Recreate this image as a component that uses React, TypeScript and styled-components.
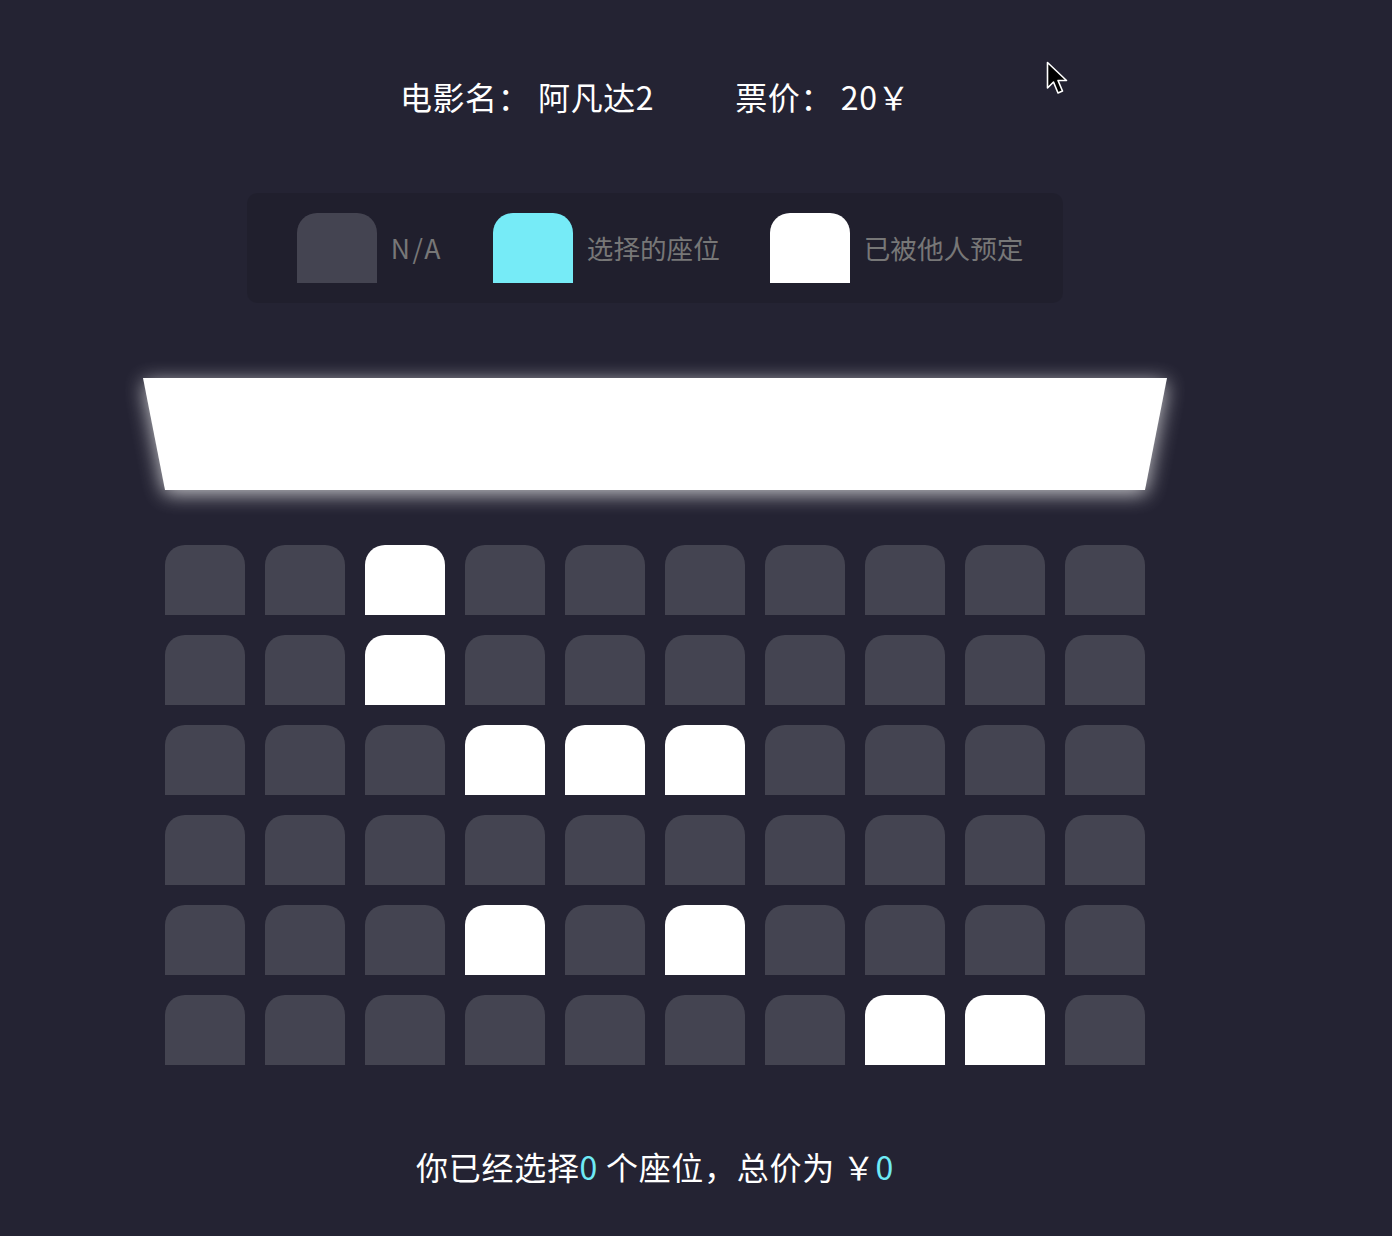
import styled, { createGlobalStyle } from 'styled-components';

const GlobalStyle = createGlobalStyle`
  body {
    margin: 0;
    background: #242333;
    font-family: "Noto Sans CJK SC", "Noto Sans", sans-serif;
    color: #fff;
  }
`;

type SeatState = 'na' | 'selected' | 'occupied';

const occupied: Record<number, number[]> = {
  0: [2],
  1: [2],
  2: [3, 4, 5],
  3: [],
  4: [3, 5],
  5: [7, 8],
};

const Page = styled.div`
  position: relative;
  width: 1310px;
  min-height: 1236px;
  display: flex;
  flex-direction: column;
  align-items: center;
`;

const Header = styled.div`
  margin-top: 72px;
  display: flex;
  gap: 81px;
  font-size: 32px;
  line-height: 48px;
  letter-spacing: 0.6px;
`;

const Legend = styled.ul`
  margin: 73px 0 0;
  padding: 20px 40px 20px 50px;
  list-style: none;
  display: flex;
  gap: 50px;
  background: rgba(0, 0, 0, 0.1);
  border-radius: 10px;
`;

const LegendItem = styled.li`
  display: flex;
  align-items: center;
  gap: 14px;
  color: #777;
  font-size: 26.6px;
  line-height: 1;
`;

const Label = styled.span<{ $wide?: boolean }>`
  letter-spacing: ${(p) => (p.$wide ? '2.5px' : '0')};
`;

const Seat = styled.div<{ $state: SeatState }>`
  width: 80px;
  height: 70px;
  border-top-left-radius: 20px;
  border-top-right-radius: 20px;
  background: ${(p) =>
    p.$state === 'occupied' ? '#fff' : p.$state === 'selected' ? '#76ebf7' : '#444451'};
`;

const ScreenGlow = styled.div`
  margin-top: 75px;
  filter: drop-shadow(0 4px 10px rgba(255, 255, 255, 0.75));
`;

const Screen = styled.div`
  width: 1024px;
  height: 112px;
  background: #fff;
  clip-path: polygon(0 0, 100% 0, calc(100% - 22px) 100%, 22px 100%);
`;

const SeatGrid = styled.div`
  margin-top: 55px;
  display: grid;
  grid-template-columns: repeat(10, 80px);
  grid-auto-rows: 70px;
  gap: 20px;
`;

const Footer = styled.p`
  margin: 77px 0 0;
  font-size: 32px;
  line-height: 48px;
  letter-spacing: 0.7px;
`;

const Count = styled.span`
  color: #6feaf6;
`;

const Cursor = styled.svg`
  position: absolute;
  left: 1046px;
  top: 61px;
`;

export default function App() {
  return (
    <>
      <GlobalStyle />
      <Page>
        <Header>
          <span>电影名： 阿凡达2</span>
          <span>票价： 20￥</span>
        </Header>
        <Legend>
          <LegendItem>
            <Seat $state="na" />
            <Label $wide>N/A</Label>
          </LegendItem>
          <LegendItem>
            <Seat $state="selected" />
            <Label>选择的座位</Label>
          </LegendItem>
          <LegendItem>
            <Seat $state="occupied" />
            <Label>已被他人预定</Label>
          </LegendItem>
        </Legend>
        <ScreenGlow>
          <Screen />
        </ScreenGlow>
        <SeatGrid>
          {Array.from({ length: 6 }).map((_, r) =>
            Array.from({ length: 10 }).map((_, c) => (
              <Seat key={`${r}-${c}`} $state={occupied[r].includes(c) ? 'occupied' : 'na'} />
            ))
          )}
        </SeatGrid>
        <Footer>
          你已经选择<Count>0</Count> 个座位，总价为 ￥<Count>0</Count>
        </Footer>
        <Cursor width="26" height="38" viewBox="0 0 26 38">
          <path
            d="M1.5 1.5 V27 L7.5 21 L12 32 L16.5 30 L12 19.5 H20.5 Z"
            fill="#000"
            stroke="#fff"
            strokeWidth="1.6"
            strokeLinejoin="round"
          />
        </Cursor>
      </Page>
    </>
  );
}
